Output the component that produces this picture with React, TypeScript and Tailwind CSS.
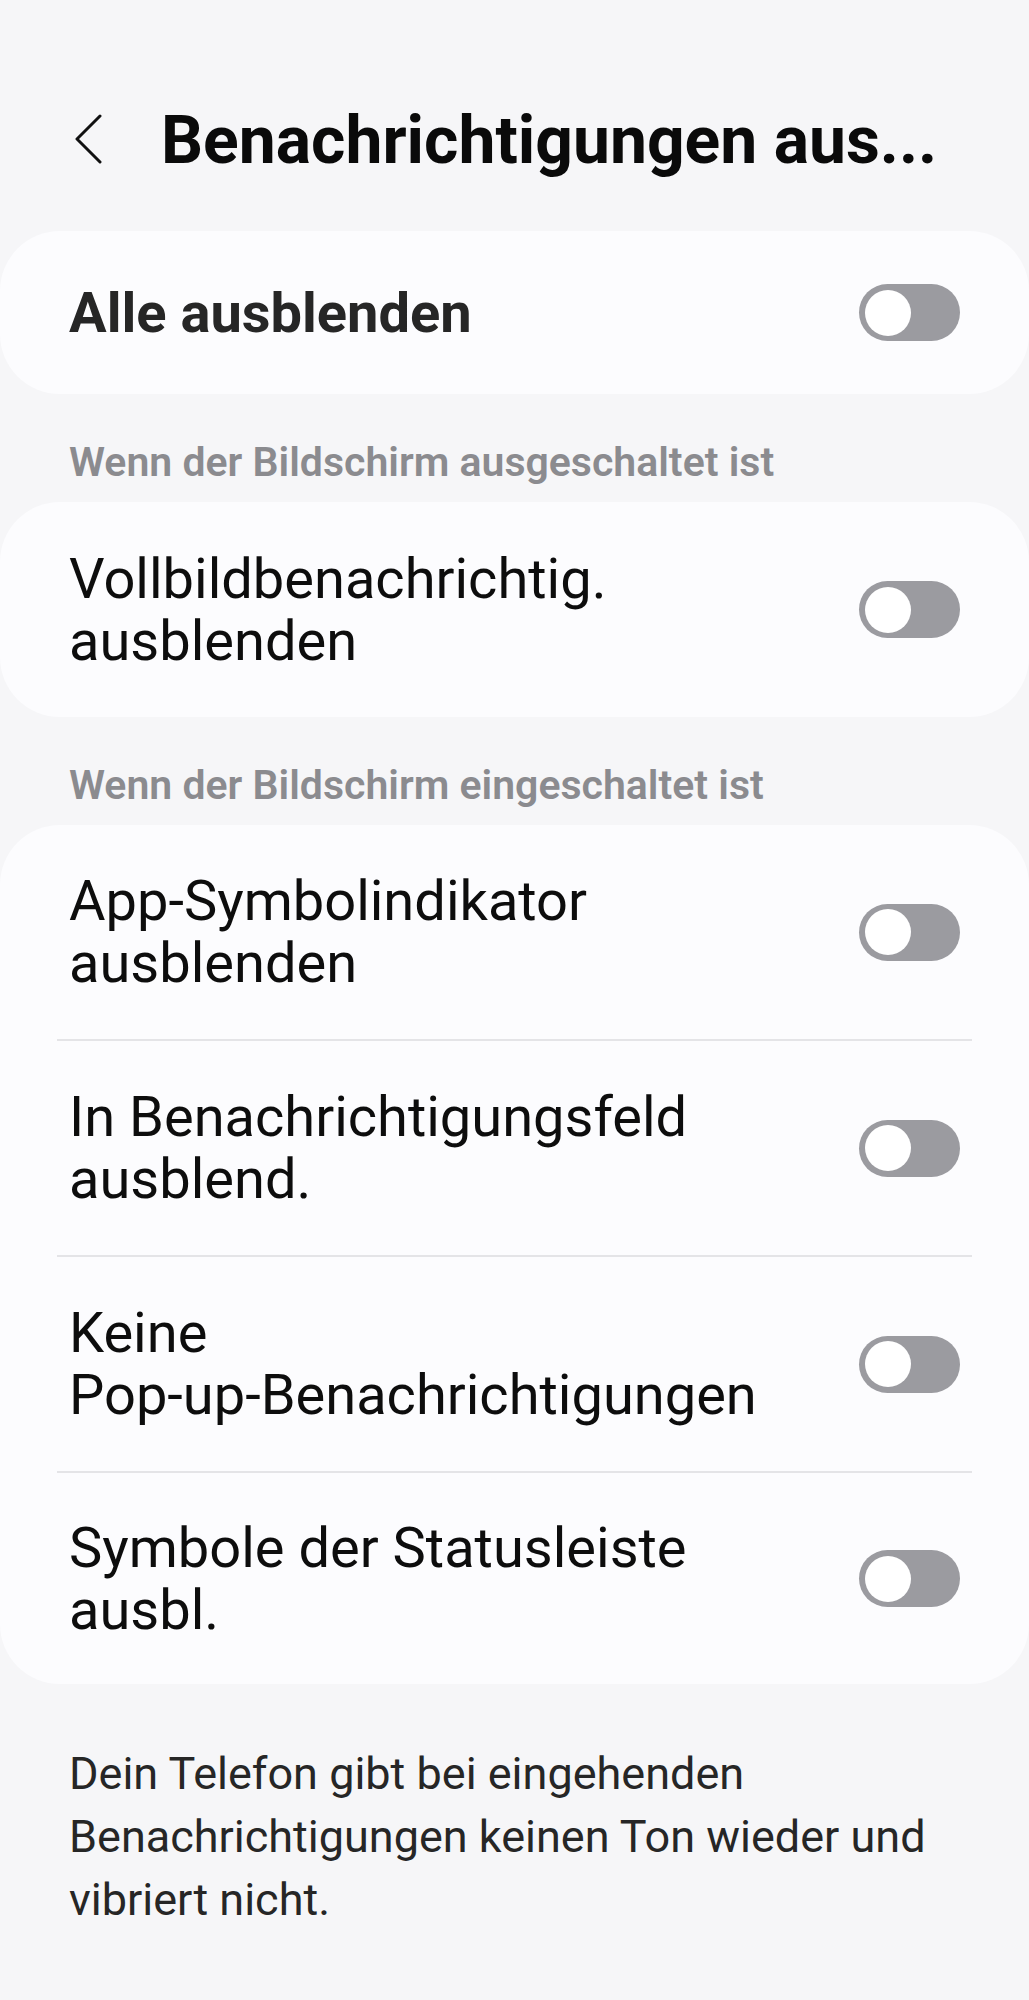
import React from 'react';

const Toggle = () => (
  <div className="flex h-[57px] w-[101px] shrink-0 items-center rounded-full bg-[#9b9ba0] pl-[6px]">
    <div className="h-[46px] w-[46px] rounded-full bg-white" />
  </div>
);

const Row = ({ label, height }: { label: React.ReactNode; height: string }) => (
  <div className={`flex items-center justify-between px-[69px] ${height}`}>
    <span className="text-[56px] leading-[62px] text-[#0d0d0d]">{label}</span>
    <Toggle />
  </div>
);

const SectionHeader = ({ children }: { children: React.ReactNode }) => (
  <div className="px-[69px] pb-[16px] pt-[44px] text-[41px] font-semibold leading-[48px] text-[#8b8b8f]">
    {children}
  </div>
);

const Divider = () => <div className="mx-[57px] h-[2px] bg-[#e4e4e7]" />;

export default function App() {
  return (
    <div
      className="min-h-[2000px] w-full bg-[#f6f6f8] pt-[101px]"
      style={{ fontFamily: 'Roboto, "Noto Sans", sans-serif' }}
    >
      {/* header */}
      <div className="flex h-[80px] items-center pl-[75px]">
        <svg width="27" height="50" viewBox="0 0 27 50" fill="none" className="mt-[-4px] shrink-0">
          <polyline
            points="25,2 2,25 25,48"
            stroke="#111"
            strokeWidth="3"
            strokeLinecap="round"
            strokeLinejoin="round"
          />
        </svg>
        <h1 className="ml-[59px] whitespace-nowrap text-[66px] font-bold leading-[80px] text-[#0a0a0a]">
          Benachrichtigungen aus...
        </h1>
      </div>

      {/* alle ausblenden */}
      <div className="mt-[50px] flex h-[163px] items-center justify-between rounded-[60px] bg-[#fcfcfe] px-[69px]">
        <span className="text-[56px] font-bold leading-[62px] text-[#262626]">Alle ausblenden</span>
        <Toggle />
      </div>

      <SectionHeader>Wenn der Bildschirm ausgeschaltet ist</SectionHeader>

      <div className="rounded-[60px] bg-[#fcfcfe]">
        <Row
          height="h-[215px]"
          label={
            <>
              Vollbildbenachrichtig.
              <br />
              ausblenden
            </>
          }
        />
      </div>

      <SectionHeader>Wenn der Bildschirm eingeschaltet ist</SectionHeader>

      <div className="rounded-[60px] bg-[#fcfcfe]">
        <Row
          height="h-[214px]"
          label={
            <>
              App-Symbolindikator
              <br />
              ausblenden
            </>
          }
        />
        <Divider />
        <Row
          height="h-[214px]"
          label={
            <>
              In Benachrichtigungsfeld
              <br />
              ausblend.
            </>
          }
        />
        <Divider />
        <Row
          height="h-[214px]"
          label={
            <>
              Keine
              <br />
              Pop-up-Benachrichtigungen
            </>
          }
        />
        <Divider />
        <Row
          height="h-[211px]"
          label={
            <>
              Symbole der Statusleiste
              <br />
              ausbl.
            </>
          }
        />
      </div>

      <p className="mt-[58px] px-[69px] text-[45px] leading-[63px] text-[#262626]">
        Dein Telefon gibt bei eingehenden
        <br />
        Benachrichtigungen keinen Ton wieder und
        <br />
        vibriert nicht.
      </p>
    </div>
  );
}
